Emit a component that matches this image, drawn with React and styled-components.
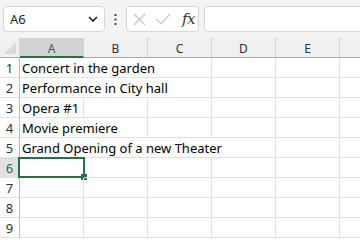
import React from 'react';
import styled, { createGlobalStyle } from 'styled-components';

const GlobalStyle = createGlobalStyle`
  html, body {
    margin: 0;
    padding: 0;
    background: #ffffff;
    overflow: hidden;
  }
  body {
    font-family: "Noto Sans", "Open Sans", sans-serif;
  }
`;

const Page = styled.div`
  width: 360px;
  height: 240px;
  overflow: hidden;
  background: #ffffff;
`;

const Toolbar = styled.div`
  height: 38px;
  box-sizing: border-box;
  display: flex;
  align-items: flex-start;
  padding: 6px 0 0 3px;
  background: #f3f3f3;
`;

const NameBox = styled.div`
  width: 102px;
  height: 26px;
  box-sizing: border-box;
  background: #ffffff;
  border: 1px solid #d6d6d6;
  border-radius: 4px;
  display: flex;
  align-items: center;
  justify-content: space-between;
  padding: 0 6px 0 6px;
  font-size: 13px;
  color: #1f1f1f;
`;

const Dots = styled.div`
  width: 21px;
  height: 26px;
  display: flex;
  align-items: center;
  justify-content: center;
`;

const FxBox = styled.div`
  width: 73px;
  height: 26px;
  box-sizing: border-box;
  background: #ffffff;
  border: 1px solid #d6d6d6;
  border-radius: 4px;
  display: flex;
  align-items: center;
  padding: 0 0 0 6px;
  gap: 9px;
`;

const Fx = styled.span`
  font-family: "DejaVu Serif", "Liberation Serif", serif;
  font-style: italic;
  font-size: 15px;
  color: #333333;
  margin-left: 2px;
  letter-spacing: -0.5px;
`;

const FormulaInput = styled.div`
  flex: 1;
  height: 26px;
  margin-left: 5px;
  box-sizing: border-box;
  background: #ffffff;
  border: 1px solid #d6d6d6;
  border-right: none;
  border-radius: 4px 0 0 4px;
`;

const Sheet = styled.div`
  display: grid;
  grid-template-columns: 20px repeat(6, 64px);
  grid-auto-rows: 20px;
`;

const Corner = styled.div`
  box-sizing: border-box;
  background: #f0f0f0;
  border-right: 1px solid #d4d4d4;
  border-bottom: 1px solid #a9a9a9;
  display: flex;
  align-items: flex-end;
  justify-content: flex-end;
  padding: 0 3px 3px 0;
`;

const ColHead = styled.div`
  box-sizing: border-box;
  background: ${p => (p.$active ? '#d2d2d2' : '#f0f0f0')};
  border-right: 1px solid #d4d4d4;
  border-bottom: ${p => (p.$active ? '2px solid #217346' : '1px solid #a9a9a9')};
  color: ${p => (p.$active ? '#217346' : '#333333')};
  font-size: 12px;
  display: flex;
  align-items: center;
  justify-content: center;
  padding-top: ${p => (p.$active ? '2px' : '1px')};
`;

const RowHead = styled.div`
  box-sizing: border-box;
  background: ${p => (p.$active ? '#e1e1e1' : '#ffffff')};
  border-right: 1px solid #bdbdbd;
  border-bottom: 1px solid #e1e1e1;
  color: ${p => (p.$active ? '#217346' : '#333333')};
  font-size: 13px;
  display: flex;
  align-items: center;
  justify-content: center;
  padding-top: 1px;
`;

const Cell = styled.div`
  box-sizing: border-box;
  position: relative;
  grid-column: span ${p => p.$span || 1};
  border-right: 1px solid #e1e1e1;
  border-bottom: 1px solid #e1e1e1;
  font-size: 13px;
  color: #000000;
  white-space: nowrap;
  padding: 1px 0 0 2px;
  line-height: 19px;
`;

const Selection = styled.div`
  position: absolute;
  left: -2px;
  top: -1px;
  right: -2px;
  bottom: -1px;
  border: 2px solid #217346;
  pointer-events: none;
`;

const Handle = styled.div`
  position: absolute;
  right: -4px;
  bottom: -4px;
  width: 6px;
  height: 6px;
  background: #217346;
`;

const columns = ['A', 'B', 'C', 'D', 'E', ''];

const rows = [
  { n: 1, text: 'Concert in the garden', span: 3 },
  { n: 2, text: 'Performance in City hall', span: 3 },
  { n: 3, text: 'Opera #1', span: 1 },
  { n: 4, text: 'Movie premiere', span: 2 },
  { n: 5, text: 'Grand Opening of a new Theater', span: 4 },
  { n: 6, text: '', span: 1, selected: true },
  { n: 7, text: '', span: 1 },
  { n: 8, text: '', span: 1 },
  { n: 9, text: '', span: 1 },
];

function Chevron() {
  return (
    <svg width="10" height="6" viewBox="0 0 10 6">
      <path d="M1 1 L5 5 L9 1" fill="none" stroke="#1f1f1f" strokeWidth="1.6" />
    </svg>
  );
}

function App() {
  return (
    <Page>
      <GlobalStyle />
      <Toolbar>
        <NameBox>
          <span>A6</span>
          <Chevron />
        </NameBox>
        <Dots>
          <svg width="3" height="11" viewBox="0 0 3 11">
            <rect x="0.5" y="0" width="2" height="2" fill="#444" />
            <rect x="0.5" y="4.5" width="2" height="2" fill="#444" />
            <rect x="0.5" y="9" width="2" height="2" fill="#444" />
          </svg>
        </Dots>
        <FxBox>
          <svg width="13" height="13" viewBox="0 0 13 13">
            <path d="M1 1 L12 12 M12 1 L1 12" stroke="#c4c4c4" strokeWidth="1.2" />
          </svg>
          <svg width="16" height="12" viewBox="0 0 16 12">
            <path d="M1 6 L6 11 L15 1" fill="none" stroke="#c4c4c4" strokeWidth="1.2" />
          </svg>
          <Fx>fx</Fx>
        </FxBox>
        <FormulaInput />
      </Toolbar>
      <Sheet>
        <Corner>
          <svg width="12" height="12" viewBox="0 0 12 12">
            <path d="M12 0 L12 12 L0 12 Z" fill="#d9d9d9" />
          </svg>
        </Corner>
        {columns.map((c, i) => (
          <ColHead key={i} $active={c === 'A'}>{c}</ColHead>
        ))}
        {rows.map(r => (
          <React.Fragment key={r.n}>
            <RowHead $active={r.selected}>{r.n}</RowHead>
            <Cell $span={r.span}>
              {r.text}
              {r.selected && (
                <Selection>
                  <Handle />
                </Selection>
              )}
            </Cell>
            {Array.from({ length: 6 - r.span }).map((_, i) => (
              <Cell key={i} />
            ))}
          </React.Fragment>
        ))}
      </Sheet>
    </Page>
  );
}

export default App;
